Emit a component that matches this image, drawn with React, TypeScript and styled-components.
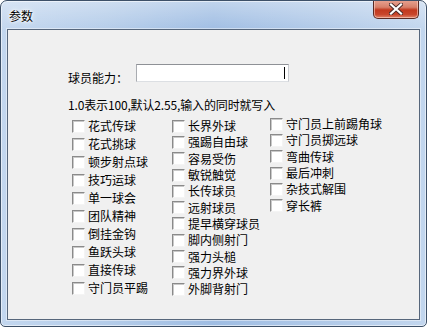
import React from "react";
import styled, { createGlobalStyle } from "styled-components";

const Global = createGlobalStyle`
  html, body { margin: 0; padding: 0; background: #ffffff; }
  body { font-family: "Noto Sans CJK SC", "Noto Sans", sans-serif; }
`;

const Window = styled.div`
  box-sizing: border-box;
  width: 427px;
  height: 327px;
  display: flex;
  flex-direction: column;
  border: 1px solid #3d5068;
  border-radius: 7px 7px 5px 5px;
  background:
    linear-gradient(180deg, rgba(255,255,255,0.35) 0px, rgba(255,255,255,0) 30px),
    linear-gradient(90deg, #c3d7ef 0%, #b4cce9 25%, #9fbde3 50%, #b0c9e8 75%, #c2d6ee 100%);
  box-shadow: inset 0 0 0 1px rgba(255,255,255,0.55);
  overflow: hidden;
  padding: 0 6px 6px 6px;
`;

const TitleBar = styled.div`
  height: 28px;
  display: flex;
  align-items: flex-start;
  justify-content: space-between;
  padding-left: 2px;
`;

const Title = styled.span`
  margin-top: 7px;
  font-size: 12px;
  line-height: 16px;
  color: #000;
  text-shadow: 0 0 6px #fff, 0 0 3px #fff, 0 0 2px #fff;
`;

const CloseButton = styled.div`
  box-sizing: border-box;
  width: 46px;
  height: 19px;
  margin-top: -1px;
  margin-right: 1px;
  border: 1px solid #5a2a24;
  border-top: none;
  border-radius: 0 0 5px 5px;
  background: linear-gradient(180deg, #e8a493 0%, #d7806a 40%, #c2391f 55%, #c8452b 80%, #e0836a 100%);
  box-shadow: inset 0 0 0 1px rgba(255,220,210,0.55);
  display: flex;
  align-items: center;
  justify-content: center;
`;

const Client = styled.div`
  flex: 1;
  background: #f0f0f0;
  border: 1px solid #56667b;
  box-shadow: 0 0 0 1px rgba(255,255,255,0.45);
  display: flex;
  flex-direction: column;
  padding: 34px 0 0 60px;
`;

const InputRow = styled.div`
  display: flex;
  align-items: flex-start;
`;

const FieldLabel = styled.span`
  width: 68px;
  margin-top: 7px;
  font-size: 12px;
  line-height: 14px;
  color: #000;
`;

const TextBox = styled.div`
  box-sizing: border-box;
  width: 153px;
  height: 18px;
  background: #fff;
  border: 1px solid;
  border-color: #8e9196 #c9ccd1 #dcdfe3 #a9acb1;
  display: flex;
  align-items: center;
  justify-content: flex-end;
  padding-right: 3px;
`;

const Caret = styled.span`
  width: 1px;
  height: 12px;
  background: #000;
`;

const Hint = styled.div`
  margin-top: 13px;
  font-size: 12px;
  line-height: 14px;
  color: #000;
  letter-spacing: -0.15px;
`;

const Grid = styled.div`
  margin-top: 4px;
  margin-left: 4px;
  display: grid;
  grid-template-columns: 100px 98px auto;
  align-items: start;
`;

const Column = styled.div<{ $rowH: number; $offset: number }>`
  display: flex;
  flex-direction: column;
  margin-top: ${(p) => p.$offset}px;
  & > * { height: ${(p) => p.$rowH}px; }
`;

const Row = styled.label`
  display: flex;
  align-items: center;
`;

const Box = styled.span`
  box-sizing: border-box;
  width: 13px;
  height: 13px;
  flex: none;
  background: #fff;
  border: 1px solid;
  border-color: #8a8a8a #f4f4f4 #f4f4f4 #8a8a8a;
  box-shadow: inset 1px 1px 0 #c9c9c9;
`;

const RowText = styled.span`
  margin-left: 3px;
  font-size: 12px;
  line-height: 14px;
  color: #000;
  white-space: nowrap;
`;

const col1 = ["花式传球", "花式挑球", "顿步射点球", "技巧运球", "单一球会", "团队精神", "倒挂金钩", "鱼跃头球", "直接传球", "守门员平踢"];
const col2 = ["长界外球", "强踢自由球", "容易受伤", "敏锐触觉", "长传球员", "远射球员", "提早横穿球员", "脚内侧射门", "强力头槌", "强力界外球", "外脚背射门"];
const col3 = ["守门员上前踢角球", "守门员掷远球", "弯曲传球", "最后冲刺", "杂技式解围", "穿长裤"];

const Check = ({ text }: { text: string }) => (
  <Row>
    <Box />
    <RowText>{text}</RowText>
  </Row>
);

export default function App() {
  return (
    <>
      <Global />
      <Window>
        <TitleBar>
          <Title>参数</Title>
          <CloseButton>
            <svg width="14" height="12" viewBox="0 0 14 12">
              <path d="M2 1.5 L12 10.5 M12 1.5 L2 10.5" stroke="#4a2a28" strokeWidth="4" strokeLinecap="square" />
              <path d="M2 1.5 L12 10.5 M12 1.5 L2 10.5" stroke="#ffffff" strokeWidth="2.2" strokeLinecap="square" />
            </svg>
          </CloseButton>
        </TitleBar>
        <Client>
          <InputRow>
            <FieldLabel>球员能力：</FieldLabel>
            <TextBox>
              <Caret />
            </TextBox>
          </InputRow>
          <Hint>1.0表示100,默认2.55,输入的同时就写入</Hint>
          <Grid>
            <Column $rowH={18} $offset={1}>
              {col1.map((t) => <Check key={t} text={t} />)}
            </Column>
            <Column $rowH={16.3} $offset={2}>
              {col2.map((t) => <Check key={t} text={t} />)}
            </Column>
            <Column $rowH={16.3} $offset={0}>
              {col3.map((t) => <Check key={t} text={t} />)}
            </Column>
          </Grid>
        </Client>
      </Window>
    </>
  );
}
